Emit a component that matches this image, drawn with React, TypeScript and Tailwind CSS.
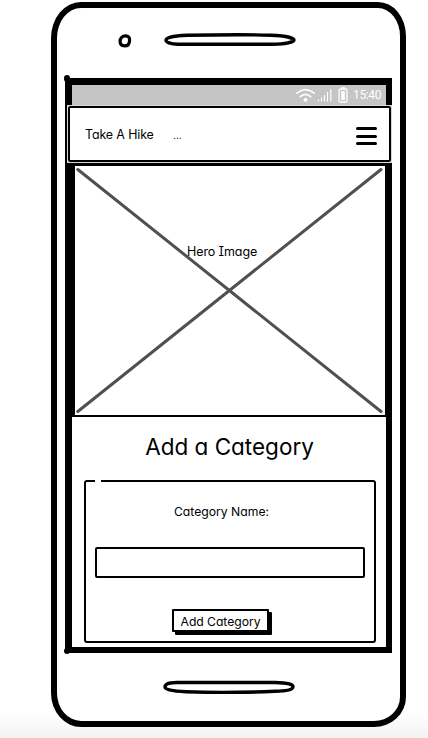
function Speaker({ d }: { d: string }) {
  return (
    <svg width="134" height="14" viewBox="0 0 134 14" fill="none" stroke="#000" strokeWidth="3.4" aria-hidden="true">
      <path d={d} strokeLinejoin="round" />
    </svg>
  );
}

function StatusBar() {
  return (
    <div className="ml-[7px] mr-[6px] flex h-5 shrink-0 items-center justify-end bg-[#c5c5c5] pr-[5px] text-white">
      <svg width="54" height="20" viewBox="0 0 54 20" fill="none" stroke="currentColor" aria-hidden="true">
        <g strokeWidth="1.7" strokeLinecap="round">
          <path d="M1 8.2Q9.500 1.200 18 8.200" />
          <path d="M4.300 11.600Q9.500 7 14.700 11.600" />
        </g>
        <circle cx="9.500" cy="14.800" r="1.900" fill="currentColor" stroke="none" />
        <path d="M22.500 14.500v2M25.500 12.500v4M28.500 10v6.500M31.500 7v9.500M34.800 4.300v12.200" strokeWidth="1.200" />
        <rect x="43" y="4" width="8" height="13" rx="1.500" strokeWidth="1.300" />
        <path d="M45 2.900h4" strokeWidth="1.300" />
        <rect x="45.200" y="6" width="3.600" height="9" fill="currentColor" stroke="none" />
      </svg>
      <time className="ml-[3px] w-7 whitespace-nowrap font-[Roboto,sans-serif] text-[12px] leading-5 tracking-[-0.35px]">
        15:40
      </time>
    </div>
  );
}

function NavBar() {
  return (
    <header className="ml-[2px] flex h-[58px] shrink-0 border border-[#d8d8d8] bg-white">
      <div className="flex flex-1 items-center rounded-[2px] border-2 border-black pl-[15px] pr-[12px] pt-[2px]">
        <span className="w-[88px] whitespace-nowrap text-[12.4px] leading-4 tracking-[-0.1px]">Take A Hike</span>
        <span className="text-[10px] leading-4">...</span>
        <button className="ml-auto flex flex-col gap-[4.500px] pt-0.5" aria-label="Menu">
          <span className="h-[3px] w-[21px] rounded-full bg-black" />
          <span className="h-[3px] w-[21px] rounded-full bg-black" />
          <span className="h-[3px] w-[21px] rounded-full bg-black" />
        </button>
      </div>
    </header>
  );
}

function Hero() {
  return (
    <section className="relative ml-[8px] mr-[5px] mt-px h-[253px] shrink-0 border-2 border-black bg-white pt-[78px]">
      <svg className="absolute inset-0" width="310" height="249" viewBox="0 0 310 249" aria-hidden="true">
        <path d="M2.800 3.500L306 245.500M306 3.500L2.800 245.500" stroke="#505050" strokeWidth="3" strokeLinecap="round" />
      </svg>
      <p className="relative ml-[112px] whitespace-nowrap text-[12.5px] leading-4 tracking-[-0.1px]">Hero Image</p>
    </section>
  );
}

function CategoryForm() {
  return (
    <form className="relative ml-[12px] mt-[17px] flex h-[163px] w-[292px] flex-col items-center rounded-[3px] border-2 border-black">
      <span className="absolute -top-[3px] left-[9px] h-1 w-1.5 bg-white" />
      <label htmlFor="category" className="mr-[17px] mt-[22px] whitespace-nowrap text-[12.2px] leading-4">
        Category Name:
      </label>
      <input id="category" className="mt-[27px] h-[31px] w-[270px] rounded-[2px] border-2 border-black outline-none" />
      <button
        type="button"
        className="mr-[19px] mt-[31px] h-[23px] w-[97px] whitespace-nowrap rounded-[1px] border-2 border-black bg-white pt-px text-center text-[12.200px] leading-[20px] tracking-[-0.05px] shadow-[3px_3px_0_#000]"
      >
        Add Category
      </button>
    </form>
  );
}

export default function App() {
  return (
    <main className="flex h-[738px] w-[428px] overflow-hidden bg-[linear-gradient(#fff_0_712px,#f3f3f3_738px)] pl-[51px] pt-[2px] font-[Inter,sans-serif] text-black [font-feature-settings:'cv11','cv08']">
      <div className="flex h-[725px] w-[355px] flex-col rounded-[30px_28px_32px_30px/36px_34px_30px_34px] border-[6px] border-black bg-white">
        <div className="flex h-[70px] shrink-0 items-start pl-[61px] pt-[25px]">
          <svg width="14" height="15" viewBox="0 0 14 15" className="mr-[31px]" aria-hidden="true">
            <path
              d="M7.600 2.800C10.200 2.700 11.600 4.300 11.600 6.900C11.600 10.600 9.900 12.900 6.600 12.900C3.500 12.900 2.100 11 2.100 8.300C2.100 5 4.400 2.900 7.600 2.800Z"
              fill="none"
              stroke="#000"
              strokeWidth="3.200"
            />
          </svg>
          <Speaker d="M24 2.300C60 1.600 90 1.600 108 2.200C122 2.700 131 4.900 131 7C131 9.300 122 11 109 11.300H15C7 11.300 3 9 3 7.300C3 4.600 12 2.700 24 2.300Z" />
        </div>

        <div className="relative ml-[8px] flex h-[575px] w-[327px] shrink-0 flex-col bg-black pt-[7px]">
          <span className="absolute -left-px -top-[3px] h-[7px] w-[6px] rounded-full bg-black" />
          <span className="absolute -bottom-px -left-px h-[6px] w-[6px] rounded-full bg-black" />
          <StatusBar />
          <NavBar />
          <Hero />
          <div className="ml-[7px] mr-[6px] flex h-[230px] shrink-0 flex-col bg-white">
            <h1 className="mt-[14px] whitespace-nowrap pl-px text-center text-[22.5px] leading-[32px]">Add a Category</h1>
            <CategoryForm />
          </div>
        </div>

        <div className="flex pl-[105px] pt-[27px]">
          <Speaker d="M15 2.500H113C126 2.700 131 4.500 131 6.500C131 9.500 126 11 113 11.300C80 12.600 45 12.600 24 11.700C10 11.200 3 9.700 3 7C3 4 8 2.500 15 2.500Z" />
        </div>
      </div>
    </main>
  );
}
